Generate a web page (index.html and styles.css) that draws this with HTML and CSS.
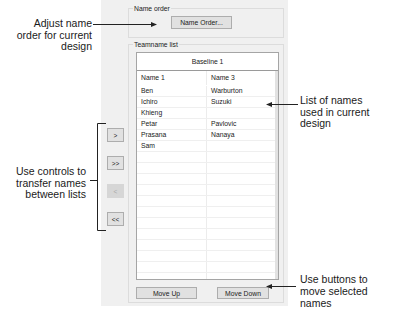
FILE: index.html
```html
<!DOCTYPE html>
<html lang="en">
<head>
    <meta charset="UTF-8">
    <meta name="viewport" content="width=device-width, initial-scale=1.0">
    <title>Teamname list</title>
    <link rel="stylesheet" href="styles.css">
</head>
<body>
    <div class="figure">
        <div class="dialog">
            <div class="transfer">
                <button class="btn arrow">&gt;</button>
                <button class="btn arrow">&gt;&gt;</button>
                <button class="btn arrow" disabled>&lt;</button>
                <button class="btn arrow">&lt;&lt;</button>
            </div>
            <div class="groups">
                <div class="group order-group">
                    <span class="group-label">Name order</span>
                    <button class="btn name-order">Name Order...</button>
                </div>
                <div class="group list-group">
                    <span class="group-label">Teamname list</span>
                    <div class="list">
                        <div class="list-head">Baseline 1</div>
                        <div class="list-body">
                            <div class="row sub"><span>Name 1</span><span>Name 3</span></div>
                            <div class="row"><span>Ben</span><span>Warburton</span></div>
                            <div class="row"><span>Ichiro</span><span>Suzuki</span></div>
                            <div class="row"><span>Khieng</span><span></span></div>
                            <div class="row"><span>Petar</span><span>Pavlovic</span></div>
                            <div class="row"><span>Prasana</span><span>Nanaya</span></div>
                            <div class="row"><span>Sam</span><span></span></div>
                            <div class="row"><span></span><span></span></div>
                            <div class="row"><span></span><span></span></div>
                            <div class="row"><span></span><span></span></div>
                            <div class="row"><span></span><span></span></div>
                            <div class="row"><span></span><span></span></div>
                            <div class="row"><span></span><span></span></div>
                            <div class="row"><span></span><span></span></div>
                            <div class="row"><span></span><span></span></div>
                            <div class="row"><span></span><span></span></div>
                            <div class="row"><span></span><span></span></div>
                            <div class="row"><span></span><span></span></div>
                            <div class="row"><span></span><span></span></div>
                        </div>
                    </div>
                    <div class="move-row">
                        <button class="btn move-up">Move Up</button>
                        <button class="btn move-down">Move Down</button>
                    </div>
                </div>
            </div>
        </div>

        <!-- callouts -->
        <p class="note note-order">Adjust name<br>order for current<br>design</p>
        <p class="note note-list">List of names<br>used in current<br>design</p>
        <p class="note note-transfer">Use controls to<br>transfer names<br>between lists</p>
        <p class="note note-move">Use buttons to<br>move selected<br>names</p>

        <svg class="leaders" width="394" height="329" viewBox="0 0 394 329">
            <g stroke="#222" stroke-width="1" fill="none">
                <line x1="93" y1="24.5" x2="152" y2="24.5"/>
                <line x1="298" y1="104.5" x2="271" y2="104.5"/>
                <line x1="296" y1="286.5" x2="271" y2="286.5"/>
                <polyline points="106,123.5 97.5,123.5 97.5,230.5 106,230.5"/>
                <line x1="90" y1="180.5" x2="97.5" y2="180.5"/>
            </g>
            <g fill="#222">
                <polygon points="157,24.5 151,22 151,27"/>
                <polygon points="266,104.5 272,102 272,107"/>
                <polygon points="266,286.5 272,284 272,289"/>
            </g>
        </svg>
    </div>
</body>
</html>
```

FILE: styles.css
```css
body { margin: 0; background: #fff; font-family: "Liberation Sans", Arial, sans-serif; }
.figure { position: relative; width: 394px; height: 329px; overflow: hidden; }

.dialog { margin-left: 101px; width: 187px; height: 306px; background: #f0f0f0; display: flex; padding-top: 8px; box-sizing: border-box; }
.transfer { width: 27px; padding: 120px 0 0 6px; box-sizing: border-box; display: flex; flex-direction: column; gap: 14px; }
.groups { width: 156px; }

.btn { font-family: "Liberation Sans", Arial, sans-serif; font-size: 6.8px; color: #222; background: #e1e1e1; border: 1px solid #adadad; padding: 0; margin: 0; box-sizing: border-box; display: block; }
.arrow { width: 17px; height: 14px; font-size: 6.5px; }
.arrow:disabled { background: #d6d6d6; border-color: #d6d6d6; color: #a8a8a8; }

.group { border: 1px solid #dcdcdc; box-sizing: border-box; }
.group-label { display: block; width: fit-content; font-size: 6.8px; line-height: 8px; color: #222; margin: -4px 0 0 4px; padding: 0 1px; background: #f0f0f0; }
.order-group { height: 30px; }
.name-order { width: 61px; height: 13px; margin: 3px 0 0 42px; }
.list-group { height: 259px; margin-top: 6px; }

.list { width: 143px; height: 228px; margin: 3px 0 0 7px; border: 1px solid #a5a5a5; box-sizing: border-box; background: #fff; overflow: hidden; display: flex; flex-direction: column; }
.list-head { height: 18px; line-height: 17px; border-bottom: 1px solid #9a9a9a; box-sizing: border-box; text-align: center; font-size: 6.8px; color: #222; }
.list-body { flex: 1; overflow: hidden; border-right: 3px solid #e2e2e2; }
.row { display: grid; grid-template-columns: 70px 1fr; height: 11px; line-height: 10px; font-size: 6.8px; color: #222; border-bottom: 1px solid #efefef; box-sizing: border-box; }
.row span { padding-left: 4px; }
.row span:first-child { border-right: 1px solid #ececec; }
.row.sub { height: 15px; line-height: 14px; border-bottom-color: #fff; }

.move-row { display: flex; margin-top: 7px; }
.move-up { width: 61px; height: 12px; margin-left: 7px; }
.move-down { width: 52px; height: 12px; margin-left: 20px; }

.note { position: absolute; margin: 0; font-size: 10.5px; line-height: 11.7px; color: #1a1a1a; }
.note-order { left: 0; top: 18px; width: 92px; text-align: right; }
.note-transfer { left: 0; top: 166px; width: 86px; text-align: right; }
.note-list { left: 300px; top: 95px; }
.note-move { left: 300px; top: 273px; line-height: 12px; }
.leaders { position: absolute; left: 0; top: 0; }
```
